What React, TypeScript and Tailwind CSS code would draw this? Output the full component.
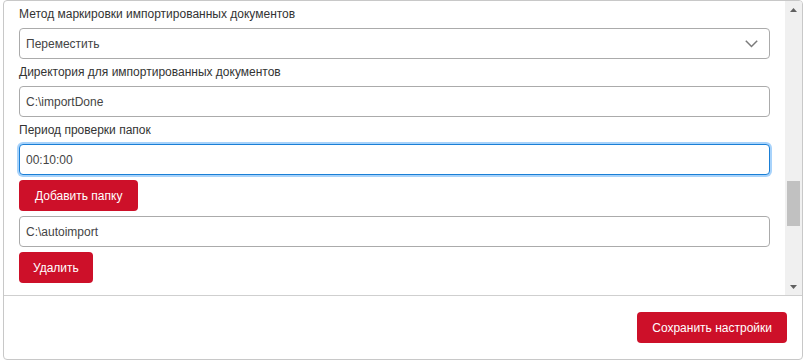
const font = { fontFamily: '"Liberation Sans", Arial, sans-serif' };

function Label({ children }: { children: string }) {
  return <div className="mt-[5px] mb-[6px] text-[12px] leading-4 text-[#333]">{children}</div>;
}

function Field({ value, focused }: { value: string; focused?: boolean }) {
  return (
    <div
      className={
        "h-[31px] flex items-center px-[6px] rounded-[4px] border bg-white text-[12px] text-[#444] " +
        (focused
          ? "border-[#1a7fd6] shadow-[0_0_0_2px_#a8d3fb]"
          : "border-[#ababab]")
      }
    >
      {value}
    </div>
  );
}

function RedButton({ children, wide }: { children: string; wide?: boolean }) {
  return (
    <button
      className={
        "h-[31px] rounded-[4px] bg-[#cd1029] text-white text-[12px] leading-none " +
        (wide ? "px-[16px]" : "px-[14px]")
      }
    >
      {children}
    </button>
  );
}

export default function App() {
  return (
    <div className="bg-white w-[806px] h-[363px]" style={font}>
      <div className="ml-[3px] w-[800px] h-[360px] border border-[#c8c8c8] rounded-[4px] flex flex-col overflow-hidden">
        <div className="flex h-[295px] border-b border-[#cfcfcf]">
          <div className="flex-1 px-[15px] flex flex-col">
            <Label>Метод маркировки импортированных документов</Label>
            <div className="h-[31px] flex items-center justify-between pl-[6px] pr-[11px] rounded-[4px] border border-[#ababab] text-[12px] text-[#444]">
              <span>Переместить</span>
              <svg width="13" height="8" viewBox="0 0 13 8">
                <path d="M0.8 0.8 L6.5 6.5 L12.2 0.8" fill="none" stroke="#7a7a7a" strokeWidth="1.5" />
              </svg>
            </div>
            <Label>Директория для импортированных документов</Label>
            <Field value="C:\importDone" />
            <Label>Период проверки папок</Label>
            <Field value="00:10:00" focused />
            <div className="mt-[5px] flex">
              <RedButton wide>Добавить папку</RedButton>
            </div>
            <div className="mt-[5px]">
              <Field value="C:\autoimport" />
            </div>
            <div className="mt-[5px] flex">
              <RedButton>Удалить</RedButton>
            </div>
          </div>
          <div className="w-[17px] bg-[#f0f0f0] flex flex-col items-center">
            <div className="h-[17px] flex items-center justify-center">
              <svg width="7" height="4" viewBox="0 0 7 4">
                <path d="M0 4 L3.5 0 L7 4 Z" fill="#606060" />
              </svg>
            </div>
            <div className="mt-[163px] w-[13px] h-[45px] bg-[#c1c1c1]" />
            <div className="flex-1" />
            <div className="h-[17px] flex items-center justify-center">
              <svg width="7" height="4" viewBox="0 0 7 4">
                <path d="M0 0 L7 0 L3.5 4 Z" fill="#606060" />
              </svg>
            </div>
          </div>
        </div>
        <div className="flex-1 flex justify-end items-center px-[15px]">
          <button className="h-[31px] px-[15px] rounded-[4px] bg-[#cd1029] text-white text-[12px] leading-none">
            Сохранить настройки
          </button>
        </div>
      </div>
    </div>
  );
}
